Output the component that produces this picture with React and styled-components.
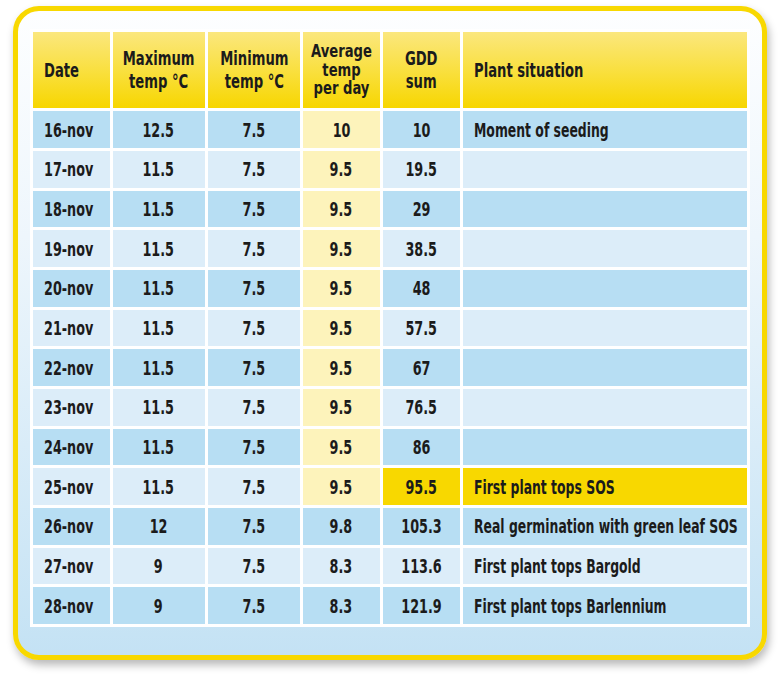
import React from "react";
import styled, { createGlobalStyle } from "styled-components";

const Global = createGlobalStyle`
  html, body { margin: 0; padding: 0; background: #ffffff; overflow: hidden; }
  body { font-family: "DejaVu Sans Condensed", "DejaVu Sans", "Liberation Sans", sans-serif; }
`;

const Page = styled.div`
  width: 780px;
  height: 677px;
  padding: 6px 0 0 13px;
  box-sizing: border-box;
  overflow: hidden;
`;

const Card = styled.div`
  width: 754px;
  height: 654px;
  box-sizing: border-box;
  border: 5.5px solid #f8d800;
  border-radius: 26px;
  background: linear-gradient(180deg, #fdfeff 0%, #eef6fc 35%, #c4e2f4 100%);
  box-shadow: 2px 5px 8px rgba(0, 0, 0, 0.28);
  padding: 17.5px 0 0 11.5px;
`;

const Grid = styled.div`
  display: grid;
  grid-template-columns: 77px 92.3px 92.4px 76.4px 77px 284.5px;
  grid-template-rows: 76.7px repeat(13, 36.7px);
  gap: 3px;
  padding: 3px 3px 2.7px 3px;
  background: #ffffff;
  width: max-content;
`;

const Head = styled.div`
  background: linear-gradient(180deg, #fbe77e 0%, #f9df3a 55%, #f7d600 100%);
  display: flex;
  align-items: center;
  justify-content: ${(p) => (p.$left ? "flex-start" : "center")};
  text-align: ${(p) => (p.$left ? "left" : "center")};
  padding: 0 ${(p) => (p.$left ? "11px" : "0")};
  font-weight: 700;
  font-size: ${(p) => p.$fs || 19}px;
  line-height: ${(p) => p.$lh || 22}px;
  color: #1b1b1b;
  white-space: nowrap;
  overflow: hidden;
`;

const bgFor = (tone) =>
  ({
    dark: "#b7def3",
    light: "#dcedf9",
    cream: "#fdf3bb",
    gold: "#f8d800",
  }[tone]);

const Cell = styled.div`
  background: ${(p) => bgFor(p.$tone)};
  display: flex;
  align-items: center;
  justify-content: ${(p) => (p.$left ? "flex-start" : "center")};
  padding: 0 ${(p) => (p.$left ? "11px" : "0")};
  font-weight: 700;
  font-size: 20px;
  color: #1b1b1b;
  white-space: nowrap;
  overflow: hidden;
`;

/* condensed look of the original face */
const Squeeze = styled.span`
  display: inline-block;
  transform: scaleX(${(p) => p.$k || 0.71});
  transform-origin: ${(p) => (p.$left ? "left center" : "center center")};
`;

const rows = [
  ["16-nov", "12.5", "7.5", "10", "10", "Moment of seeding"],
  ["17-nov", "11.5", "7.5", "9.5", "19.5", ""],
  ["18-nov", "11.5", "7.5", "9.5", "29", ""],
  ["19-nov", "11.5", "7.5", "9.5", "38.5", ""],
  ["20-nov", "11.5", "7.5", "9.5", "48", ""],
  ["21-nov", "11.5", "7.5", "9.5", "57.5", ""],
  ["22-nov", "11.5", "7.5", "9.5", "67", ""],
  ["23-nov", "11.5", "7.5", "9.5", "76.5", ""],
  ["24-nov", "11.5", "7.5", "9.5", "86", ""],
  ["25-nov", "11.5", "7.5", "9.5", "95.5", "First plant tops SOS"],
  ["26-nov", "12", "7.5", "9.8", "105.3", "Real germination with green leaf SOS"],
  ["27-nov", "9", "7.5", "8.3", "113.6", "First plant tops Bargold"],
  ["28-nov", "9", "7.5", "8.3", "121.9", "First plant tops Barlennium"],
];

const headers = [
  { t: "Date", left: true },
  { t: "Maximum\ntemp °C", lh: 23 },
  { t: "Minimum\ntemp °C", lh: 23 },
  { t: "Average\ntemp\nper day", lh: 18.5, fs: 18.5, k: 0.79 },
  { t: "GDD\nsum", lh: 23 },
  { t: "Plant situation", left: true },
];

export default function App() {
  return (
    <Page>
      <Global />
      <Card>
        <Grid>
          {headers.map(({ t, left, lh, fs, k }, i) => (
            <Head key={i} $left={left} $lh={lh} $fs={fs}>
              <Squeeze $left={left} $k={k || 0.77}>
                {t.split("\n").map((l, j) => (
                  <React.Fragment key={j}>
                    {j > 0 && <br />}
                    {l}
                  </React.Fragment>
                ))}
              </Squeeze>
            </Head>
          ))}
          {rows.map((r, ri) => {
            const base = ri % 2 === 0 ? "dark" : "light";
            const highlight = ri === 9;
            return r.map((v, ci) => {
              let tone = base;
              if (ci === 3 && ri <= 9) tone = "cream";
              if (highlight && ci >= 4) tone = "gold";
              const left = ci === 0 || ci === 5;
              return (
                <Cell key={`${ri}-${ci}`} $tone={tone} $left={left}>
                  {v && (
                    <Squeeze $left={left} $k={ci === 5 ? 0.69 : 0.71}>
                      {v}
                    </Squeeze>
                  )}
                </Cell>
              );
            });
          })}
        </Grid>
      </Card>
    </Page>
  );
}
